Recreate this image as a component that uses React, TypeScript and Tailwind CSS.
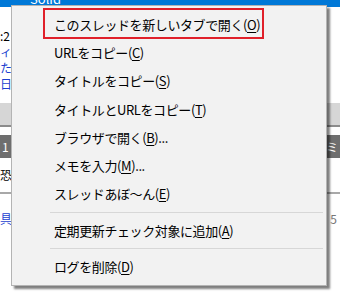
import * as React from "react";

const font = { fontFamily: '"Noto Sans CJK JP", "Noto Sans", sans-serif' };

type Item = { label: string; key: string; tail?: string };

const group1: Item[] = [
  { label: "このスレッドを新しいタブで開く", key: "O" },
  { label: "URLをコピー", key: "C" },
  { label: "タイトルをコピー", key: "S" },
  { label: "タイトルとURLをコピー", key: "T" },
  { label: "ブラウザで開く", key: "B", tail: "..." },
  { label: "メモを入力", key: "M", tail: "..." },
  { label: "スレッドあぼ〜ん", key: "E" },
];

function MenuItem({ item }: { item: Item }) {
  return (
    <div className="h-[28.3px] flex items-center pl-[42px] text-[13px] tracking-[-0.4px] text-black leading-none whitespace-nowrap">
      <span>
        {item.label}(<span className="underline underline-offset-2">{item.key}</span>){item.tail}
      </span>
    </div>
  );
}

function Separator() {
  return (
    <div className="h-[8px] flex items-center pl-[38px] pr-[3px]">
      <div className="h-px w-full bg-[#d7d7d7]" />
    </div>
  );
}

export default function App() {
  return (
    <div className="relative w-[340px] h-[296px] overflow-hidden bg-white" style={font}>
      {/* background list */}
      <div className="flex flex-col">
        <div className="h-[7px] bg-[#0078d7] overflow-hidden text-white text-[13px] leading-none pl-[30px]">
          <span className="relative -top-[8px]">Solid</span>
        </div>
        <div className="h-[96px] flex flex-col text-[12px] leading-[16px] pt-[21px]">
          <div className="text-black">:2</div>
          <div className="text-[#1c3fd0]">ィ</div>
          <div className="text-[#1c3fd0]">た</div>
          <div className="text-[#1c3fd0]">日,</div>
        </div>
        <div className="h-[22px] bg-[#d6d6d6]" />
        <div className="h-[2px] bg-[#8c8c8c]" />
        <div className="h-[8px]" />
        <div className="h-[23px] bg-[#6e6e6e] flex items-center justify-between text-white text-[12px] leading-none">
          <span className="pl-[2px]">1</span>
          <span className="pr-[2px]">ミ</span>
        </div>
        <div className="h-[34px] flex items-center text-[12px] text-black leading-none">
          <span>恐</span>
        </div>
        <div className="h-[2px] bg-[#a8a8a8]" />
        <div className="flex justify-between text-[12px] leading-none pt-[19px]">
          <span className="text-[#1c3fd0]">具</span>
          <span className="text-[#777] pr-[3px]">5</span>
        </div>
      </div>

      {/* context menu */}
      <div className="absolute left-[11px] top-[5px] w-[316px] h-[281px] bg-[#f2f2f2] border border-[#b4b4b4] shadow-[3px_3px_2px_rgba(0,0,0,0.5)] pt-[4px]">
        <div className="absolute left-[31px] top-[2px] w-[221px] h-[31px] border-2 border-[#e0202a]" />
        {group1.map((it) => (
          <MenuItem key={it.key} item={it} />
        ))}
        <Separator />
        <MenuItem item={{ label: "定期更新チェック対象に追加", key: "A" }} />
        <Separator />
        <MenuItem item={{ label: "ログを削除", key: "D" }} />
      </div>
    </div>
  );
}
